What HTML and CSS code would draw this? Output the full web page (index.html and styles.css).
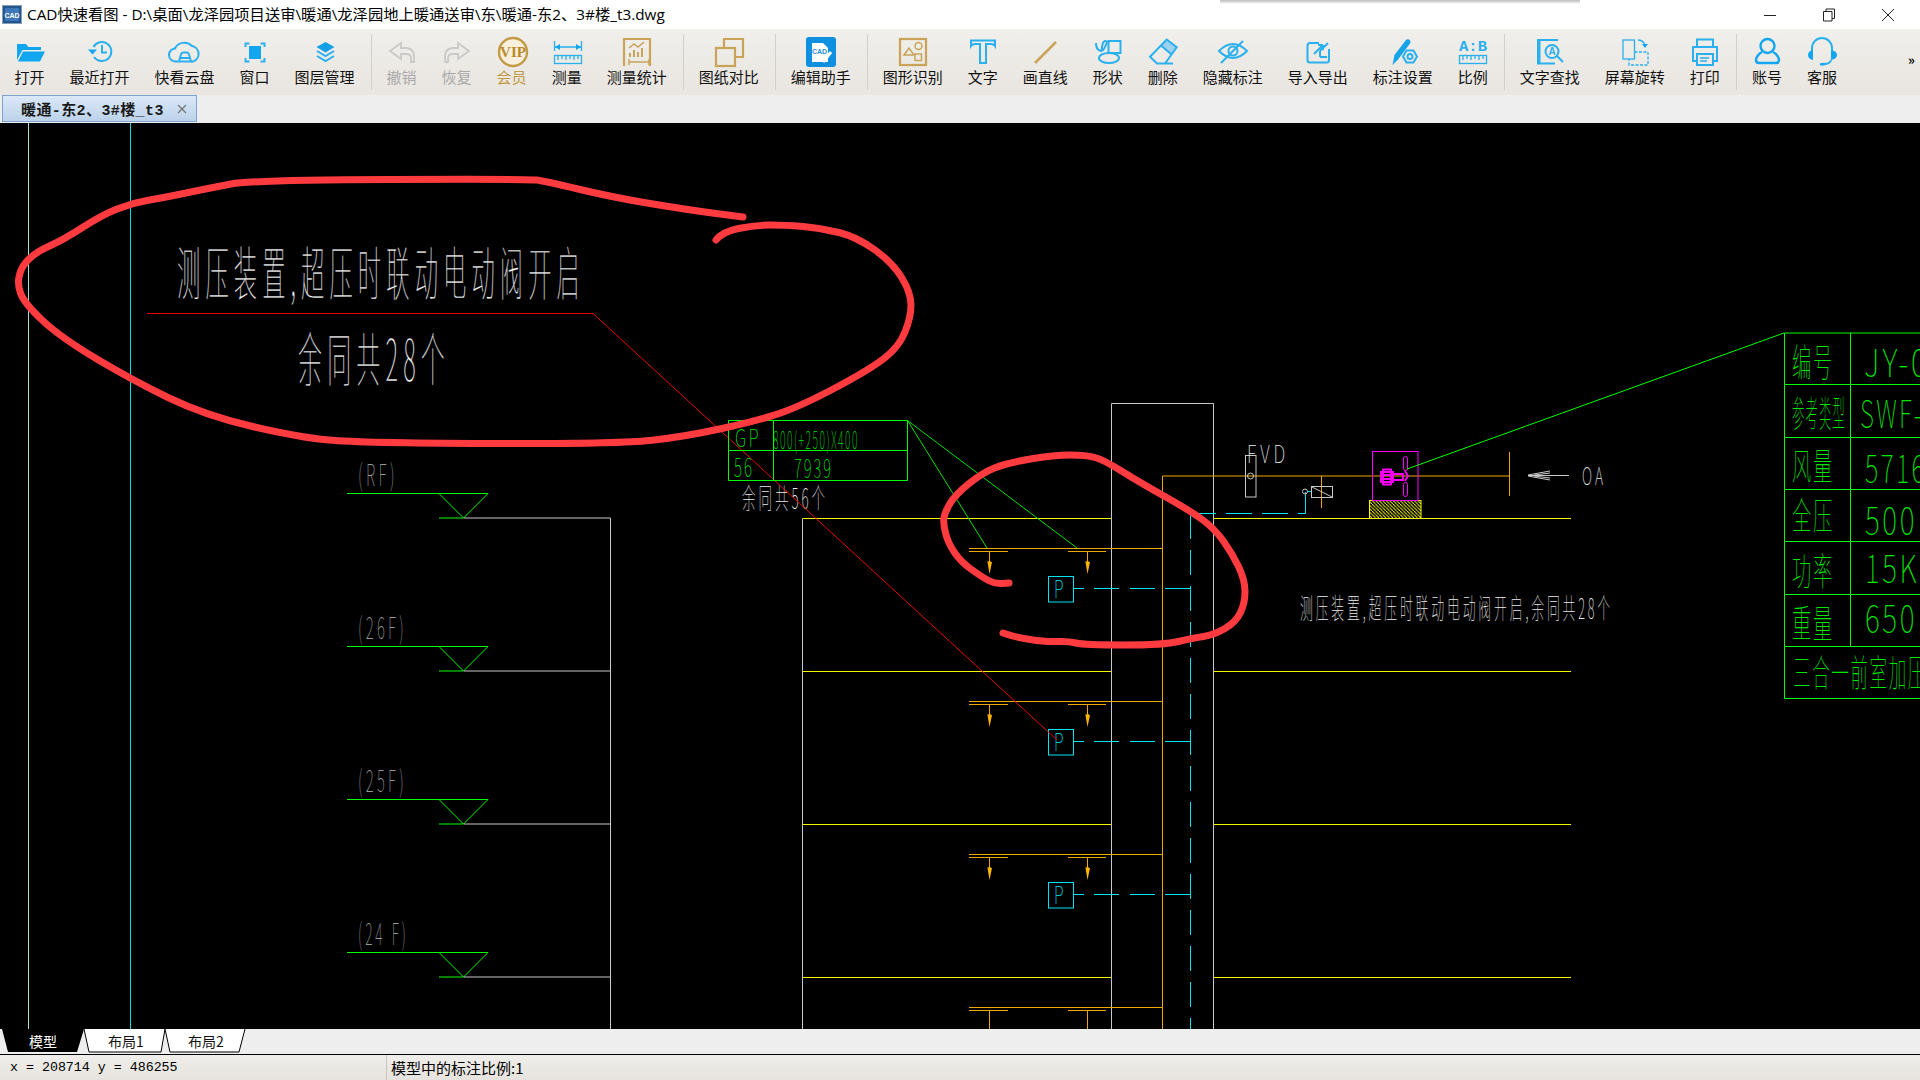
FILE: index.html
```html
<!DOCTYPE html>
<html lang="zh">
<head>
<meta charset="UTF-8">
<link rel="stylesheet" href="styles.css">
<title>CAD快速看图</title>
</head>
<body>
<div class="app">

<div class="titlebar">
  <svg class="appicon" width="20" height="19" viewBox="0 0 20 19"><rect x="0.5" y="0.5" width="19" height="18" fill="#23558f" stroke="#8aa0b8"/><rect x="3" y="3" width="14" height="13" fill="#3f78b8"/><text x="10" y="12.5" class="appicon-text">CAD</text></svg>
  <span class="title">CAD快速看图 - D:\桌面\龙泽园项目送审\暖通\龙泽园地上暖通送审\东\暖通-东2、3#楼_t3.dwg</span>
  <div class="winctl">
    <svg width="14" height="14" viewBox="0 0 14 14"><path d="M1 7.5h12" class="winline"/></svg>
    <svg width="14" height="14" viewBox="0 0 14 14"><path d="M1.5 3.5h8.500v9.500h-8.500zM4 3.500v-2.500h8.500v9.500h-2.500" class="winline"/></svg>
    <svg width="14" height="14" viewBox="0 0 14 14"><path d="M1 1l12 12M13 1l-12 12" class="winline"/></svg>
  </div>
  <div class="shadow"></div>
</div>

<div class="toolbar">
  <div class="tool"><svg viewBox="0 0 40 38"><path class="fb" d="M7 14h9l2.500 3H31v3H12.500L7 30z"/><path class="fb" d="M13 21.500h22L30 31.500H8z"/></svg><span>打开</span></div>
  <div class="tool"><svg viewBox="0 0 40 38"><path class="sb" d="M13.500 17A9.500 9.500 0 1 1 14 27"/><path class="fb" d="M8 19.500h9l-4.500 5z"/><path class="sb" d="M22 15v7.500h5"/></svg><span>最近打开</span></div>
  <div class="tool"><svg viewBox="0 0 40 38"><path class="sb" d="M13 31.500h-2a6.500 6.500 0 0 1-1-13A10 9 0 0 1 27 16a8 8 0 0 1 1 15.500h-2"/><path class="sb" d="M14 31.500l2-7q.5-2 2.500-2h3q2 0 2.500 2l2 7zM15 28h10"/></svg><span>快看云盘</span></div>
  <div class="tool"><svg viewBox="0 0 40 38"><path class="sb" d="M10.500 17v-3.500h4M25.500 13.500h4V17M29.500 28v3.500h-4M14.500 31.500h-4V28"/><rect class="fb" x="14" y="16" width="12" height="13"/></svg><span>窗口</span></div>
  <div class="tool"><svg viewBox="0 0 40 38"><path fill="#13a0e6" d="M20.500 12l9 5-9 5.500-9-5.500z"/><path class="sb" d="M12 21l8.500 5 8.500-5M12 26l8.500 5 8.500-5"/></svg><span>图层管理</span></div>
  <i class="sep"></i>
  <div class="tool off"><svg viewBox="0 0 40 38"><path class="sg" d="M8 21l11-8v5h5q8 .5 8 8v6h-3v-4q0-4-5-4h-5v5z"/></svg><span>撤销</span></div>
  <div class="tool off"><svg viewBox="0 0 40 38"><path class="sg" d="M32 21l-11-8v5h-5q-8 .5-8 8v6h3v-4q0-4 5-4h5v5z"/></svg><span>恢复</span></div>
  <div class="tool vip"><svg viewBox="0 0 40 38"><circle cx="21" cy="22" r="14" fill="#f8f0dc" stroke="#c39a45" stroke-width="2.400"/><text x="21" y="27" class="viptext">VIP</text></svg><span>会员</span></div>
  <div class="tool"><svg viewBox="0 0 40 38"><path class="thin" d="M7.500 11v10M34.500 11v10M8 17h26"/><path class="fb" d="M8 17l5-3v6zM34 17l-5-3v6z"/><rect class="thin" x="7.500" y="25.500" width="27" height="8"/><path class="thin" d="M11 26v4M15 26v3M19 26v4M23 26v3M27 26v4M31 26v3"/></svg><span>测量</span></div>
  <div class="tool"><svg viewBox="0 0 40 38"><path class="sd" d="M7 26V9h26v17M7 26v10M33 26v10"/><path class="fd" d="M12 23h2v4h-2zM16 20h2v7h-2zM20 22h2v5h-2zM24 18h2v9h-2z"/><path class="thin-d" d="M12 18l5-4 4 3 6-5M12 32h20M12 29v6M32 29v6"/></svg><span>测量统计</span></div>
  <i class="sep"></i>
  <div class="tool"><svg viewBox="0 0 40 38"><path class="sd" d="M15 17V9h19v18h-8"/><rect class="sd" x="7" y="18" width="19" height="18"/></svg><span>图纸对比</span></div>
  <i class="sep"></i>
  <div class="tool"><svg viewBox="0 0 40 38"><rect x="5" y="7" width="30" height="30" rx="3" fill="#0e8fe0"/><path fill="#fff" d="M11 13h11l5 5v14H11z"/><text x="18.500" y="24" class="cadtext">CAD</text><path stroke="#fff" stroke-width="3" d="M22 32l8-10"/></svg><span>编辑助手</span></div>
  <i class="sep"></i>
  <div class="tool"><svg viewBox="0 0 40 38"><rect class="sd" x="7" y="9" width="26" height="26"/><path class="thin-d" d="M11 25l5-7 5 7z"/><circle class="thin-d" cx="25.500" cy="16" r="3.500"/><rect class="thin-d" x="22" y="24" width="6.500" height="6.500"/></svg><span>图形识别</span></div>
  <div class="tool"><svg viewBox="0 0 40 38"><path class="sb" d="M8 16v-5.500h24V16c-1-1.500-2-2-4-2h-5v19h-6V14h-5c-2 0-3 .5-4 2z"/></svg><span>文字</span></div>
  <div class="tool"><svg viewBox="0 0 40 38"><path stroke="#c7a559" stroke-width="2.500" d="M10 33l21-21" fill="none"/></svg><span>画直线</span></div>
  <div class="tool"><svg viewBox="0 0 40 38"><rect class="sb" x="20.500" y="11" width="12" height="12"/><ellipse class="sb" cx="21" cy="28" rx="10" ry="5"/><path class="sb" d="M8 13c0 6 3 9 7 7 2-2 3-5 4-8-1-2-3-1-4 1-1 3-1 5-2 9"/></svg><span>形状</span></div>
  <div class="tool"><svg viewBox="0 0 40 38"><path fill="#9fd0ef" d="M18 15.500l5.700-6 10 7.800-6 6.700z"/><path class="sb" d="M7 26.700L23.700 9.500l10 7.800L22 33.500h-8zM18 15.500l10 8.500M14 33.500h16"/></svg><span>删除</span></div>
  <div class="tool"><svg viewBox="0 0 40 38"><path class="sb" d="M6 21q14-14 28 0-14 14-28 0z"/><circle class="sb" cx="20" cy="21" r="4.500"/><path class="sb" d="M8 33L30 11"/></svg><span>隐藏标注</span></div>
  <div class="tool"><svg viewBox="0 0 40 38"><path class="sb" d="M21 13h-9q-2.500 0-2.500 2.500v15q0 2 2.500 2h17q2 0 2-2.500v-11"/><path class="sb" d="M16 24l9-9M25 15h-5M25 15v5M22 21l8-8M22 21v6M22 27h7"/></svg><span>导入导出</span></div>
  <div class="tool"><svg viewBox="0 0 40 38"><path fill="#15a3ea" d="M9.500 35l2-10L23 10q2-1.500 4 .5 1 1.500 0 3l-12 16z"/><path class="sb" d="M20 26.500l3.500-6h7l3.500 6-3.500 6h-7z"/><circle class="sb" cx="27" cy="26.500" r="2.500"/></svg><span>标注设置</span></div>
  <div class="tool"><svg viewBox="0 0 40 38"><text x="6" y="21" class="abtext" textLength="28" lengthAdjust="spacingAndGlyphs">A:B</text><rect class="thin" x="6.500" y="25.500" width="27" height="8"/><path class="thin" d="M10 26v4M14 26v3M18 26v4M22 26v3M26 26v4M30 26v3"/></svg><span>比例</span></div>
  <i class="sep"></i>
  <div class="tool"><svg viewBox="0 0 40 38"><path class="sb" d="M28 10H8v23.500h17"/><path stroke="#2ab0ef" stroke-width="3" fill="none" d="M9 10v23"/><circle class="sb" cx="22" cy="21.500" r="6.500"/><path class="sb" d="M27 26l6 6"/><text x="22" y="25" class="atext">A</text></svg><span>文字查找</span></div>
  <div class="tool"><svg viewBox="0 0 40 38"><rect class="thin" x="8" y="10" width="11.500" height="19"/><path class="thin dashed" d="M19.500 22H33v13H14v-6"/><path class="thin" d="M23 10q5 0 7 5"/><path class="fb" d="M27 14h6l-3 4z"/></svg><span>屏幕旋转</span></div>
  <div class="tool"><svg viewBox="0 0 40 38"><path class="sb" d="M12 17v-7.500h16V17M12 31H8V17h24v14h-4"/><rect class="sb" x="12" y="24" width="16" height="11"/><path class="thin" d="M15 28h9M15 31h7"/></svg><span>打印</span></div>
  <i class="sep"></i>
  <div class="tool"><svg viewBox="0 0 40 38"><circle cx="20.500" cy="16" r="7" fill="none" stroke="#12a6f2" stroke-width="2.400"/><path fill="none" stroke="#12a6f2" stroke-width="2.400" d="M15 22c-4 2-6 6-6 8 0 2 1 3 3 3h17c2 0 3-1 3-3 0-2-2-6-6-8"/></svg><span>账号</span></div>
  <div class="tool"><svg viewBox="0 0 40 38"><path class="sb" d="M10 22v-4a10 10 0 0 1 20 0v4M29 30q-1 4-7 4"/><path class="fb" d="M11 20v10q-5-1-5-5t5-5zM29 20v10q6-1 6-5t-6-5z"/><rect class="fb" x="18" y="33" width="5" height="2.500" rx="1"/></svg><span>客服</span></div>
  <div class="more">»</div>
</div>

<div class="tabrow">
  <div class="doctab"><span>暖通-东2、3#楼_t3</span><svg width="10" height="10" viewBox="0 0 10 10"><path d="M1 1l8 8M9 1l-8 8" stroke="#777" stroke-width="1.300"/></svg></div>
</div>

<svg class="drawing" viewBox="0 123 1920 906">
  <defs>
    <pattern id="hatch" width="3.500" height="3.500" patternUnits="userSpaceOnUse">
      <path d="M0 0l3.500 3.500" stroke="#ffff00" stroke-width="1"/>
    </pattern>
    <g id="level">
      <path class="grn" d="M347 493.500h141l-24.500 24.500-24.500-24.500M439 518h24"/>
      <path class="wht" d="M463.500 518H610.500V671"/>
    </g>
    <g id="floor">
      <path class="org" d="M969 548.500H1162M969 551.500h39M1068 551.500h38M989.500 551v20M1087.500 551v20"/>
      <path class="arw" d="M986.500 560l1.500 2 1.500-2 1.500 2 1 0-2.500 12-2-12zM1084.500 560l1.500 2 1.500-2 1.500 2 1 0-2.500 12-2-12z"/>
      <rect class="cyn" x="1048.500" y="576.500" width="25" height="25.500"/>
      <text class="cad cyt" x="1054" y="598" font-size="25" textLength="13" lengthAdjust="spacingAndGlyphs">P</text>
      <path class="cyn" d="M1073 588.500h11M1094 588.500h25M1130 588.500h25M1165 588.500h25"/>
    </g>
  </defs>

  <path class="pale" d="M28.500 123V1029"/>
  <path class="cya2" d="M130.500 123V1029"/>

  <use href="#level"/>
  <use href="#level" y="153"/>
  <use href="#level" y="306"/>
  <use href="#level" y="459"/>
  <text class="cad gry" x="358" y="486" font-size="30" textLength="40" lengthAdjust="spacingAndGlyphs">(RF)</text>
  <text class="cad gry" x="358" y="639" font-size="30" textLength="49" lengthAdjust="spacingAndGlyphs">(26F)</text>
  <text class="cad gry" x="358" y="792" font-size="30" textLength="49" lengthAdjust="spacingAndGlyphs">(25F)</text>
  <text class="cad gry" x="358" y="945" font-size="30" textLength="51" lengthAdjust="spacingAndGlyphs">(24 F)</text>

  <path class="wht" d="M802.500 1029V518.500M1111.500 1029V403.500H1213.500V1029"/>
  <path class="ylw" d="M802.500 518.500H1111M802.500 671.500H1111M802.500 824.500H1111M802.500 977.500H1111M1214 518.500H1571M1214 671.500H1571M1214 824.500H1571M1214 977.500H1571"/>

  <path class="org" d="M1162.500 1029V476H1509M1509.500 452V496M1321.500 476V508"/>
  <use href="#floor"/>
  <use href="#floor" y="153"/>
  <use href="#floor" y="306"/>
  <path class="org" d="M969 1007.500H1162M969 1010.500h39M1068 1010.500h38M989.500 1010v19M1087.500 1010v19"/>

  <path class="cyn" stroke-dasharray="25 11" d="M1190.500 514V1029"/>
  <path class="cyn" d="M1190 513.500h26M1226 513.500h26M1262 513.500h26M1298 513.500h7.500V492M1307 491.500h4"/>
  <circle class="wht" cx="1305" cy="491.500" r="2.500"/>
  <rect class="wht" x="1311.500" y="486.500" width="21" height="11"/>
  <path class="wht" d="M1312 487l20 10"/>

  <rect class="wht" x="1245.500" y="455.500" width="10.500" height="41.500"/>
  <circle class="wht" cx="1250.500" cy="476" r="3"/>
  <text class="cad wtx" x="1247" y="463" font-size="25" textLength="42" lengthAdjust="spacingAndGlyphs">FVD</text>

  <rect class="hat" x="1369.500" y="500.500" width="51.500" height="18"/>
  <rect class="mag" x="1372.500" y="451.500" width="45.500" height="49"/>
  <path class="mag2" d="M1381 472h12v10h-12zM1383 469.500h8v15h-8zM1381 475h12M1381 479h12M1393 474h10v6h-10zM1405 471l3 5-3 5"/>
  <rect class="mag" x="1403.500" y="456.500" width="4" height="14" rx="2"/>
  <rect class="mag" x="1403.500" y="482.500" width="4" height="14" rx="2"/>
  <path class="wht" d="M1528 475.500H1569M1528 475l22-4M1528 476l22 4M1534 475l16-2M1534 476l16 2"/>
  <text class="cad wtx" x="1582" y="485" font-size="25" textLength="24" lengthAdjust="spacingAndGlyphs">OA</text>

  <path class="grn" d="M1407 469L1784 333"/>
  <path class="grn" d="M1784.500 333V698.500H1920M1784.500 333H1920M1784.500 384.500H1920M1784.500 437.500H1920M1784.500 489.500H1920M1784.500 541.500H1920M1784.500 594.500H1920M1784.500 646.500H1920M1850.500 333V646"/>
  <g class="cad grt">
    <text x="1792" y="376" font-size="38" textLength="42" lengthAdjust="spacingAndGlyphs">编号</text>
    <text x="1792" y="427" font-size="36" textLength="54" lengthAdjust="spacingAndGlyphs">参考类型</text>
    <text x="1792" y="480" font-size="37" textLength="42" lengthAdjust="spacingAndGlyphs">风量</text>
    <text x="1792" y="530" font-size="37" textLength="42" lengthAdjust="spacingAndGlyphs">全压</text>
    <text x="1792" y="585" font-size="38" textLength="42" lengthAdjust="spacingAndGlyphs">功率</text>
    <text x="1792" y="637" font-size="38" textLength="42" lengthAdjust="spacingAndGlyphs">重量</text>
    <text x="1793" y="687" font-size="37" textLength="134" lengthAdjust="spacingAndGlyphs">三合一前室加压</text>
    <text x="1864" y="377" font-size="38" textLength="66" lengthAdjust="spacingAndGlyphs">JY-0</text>
    <text x="1860" y="428" font-size="38" textLength="64" lengthAdjust="spacingAndGlyphs">SWF-</text>
    <text x="1865" y="483" font-size="38" textLength="62" lengthAdjust="spacingAndGlyphs">5716</text>
    <text x="1865" y="535" font-size="38" textLength="52" lengthAdjust="spacingAndGlyphs">500</text>
    <text x="1865" y="583" font-size="38" textLength="54" lengthAdjust="spacingAndGlyphs">15K</text>
    <text x="1865" y="633" font-size="38" textLength="52" lengthAdjust="spacingAndGlyphs">650</text>
  </g>

  <text class="cad wtx" x="1300" y="619" font-size="28" textLength="313" lengthAdjust="spacingAndGlyphs">测压装置,超压时联动电动阀开启,余同共28个</text>
  <text class="cad big" x="177" y="295" font-size="58" textLength="408" lengthAdjust="spacingAndGlyphs">测压装置,超压时联动电动阀开启</text>
  <text class="cad big" x="298" y="381" font-size="58" textLength="152" lengthAdjust="spacingAndGlyphs">余同共28个</text>
  <text class="cad wtx" x="742" y="509" font-size="28" textLength="86" lengthAdjust="spacingAndGlyphs">余同共56个</text>

  <path class="redl" d="M147 313.500H593L1057 740"/>

  <path class="grn" d="M728.500 420.500H907.500V480.500H728.500zM728.500 450.500H907.500M773.500 420.500V480.500"/>
  <path class="gr2" d="M907.500 420.500L987 548M907.500 420.500L1077 548"/>
  <g class="cad grt">
    <text x="735" y="447" font-size="25" textLength="26" lengthAdjust="spacingAndGlyphs">GP</text>
    <text x="773" y="449" font-size="24" textLength="86" lengthAdjust="spacingAndGlyphs">800(+250)X400</text>
    <text x="734" y="477" font-size="26" textLength="20" lengthAdjust="spacingAndGlyphs">56</text>
    <text x="794" y="478" font-size="26" textLength="39" lengthAdjust="spacingAndGlyphs">7939</text>
  </g>

  <path class="ink" d="M743 217L716 213.500Q689 210 650 203.500Q611 197 578 189Q545 181 536 180Q527 179 390 179.500Q252 180 231 184Q210 188 186 193Q162 198 147 200.500Q132 203 117 209Q102 215 82.500 227.500Q63 240 49.500 246Q36 252 28.500 259.500Q21 267 19.500 275Q17 283 20.500 293Q24 303 42 320Q60 337 96 358.500Q132 380 168 397.500Q204 415 250.500 426Q297 437 328.500 440Q360 443 488.500 443.500Q617 444 650 440.500Q683 437 722 428.500Q761 420 782 412.500Q803 405 836 387.500Q869 370 884 358.500Q899 347 905 332Q911 317 911 305Q911 293 902 278Q893 263 875 250Q857 237 839 232.500Q821 228 803 226.500Q785 225 770 225Q755 225 738.500 228.500Q722 232 716 240"/>
  <path class="ink" d="M1009 583L1002 583.500Q995 584 988.500 580.500Q982 577 971.500 569.500Q961 562 954.500 552.500Q948 543 945.500 533Q943 523 944 517.500Q945 512 950 503.500Q955 495 968.500 484Q982 473 994.500 468Q1007 463 1030.500 459Q1054 455 1070 455Q1086 455 1095 457.500Q1104 460 1121.500 471Q1139 482 1164 496Q1189 510 1201.500 519Q1214 528 1223 540.500Q1232 553 1238.500 566.500Q1245 580 1245 591.500Q1245 603 1240.500 612.500Q1236 622 1225 628.500Q1214 635 1203.500 636.500Q1193 638 1178.500 641.500Q1164 645 1124 645Q1084 645 1076 643Q1068 641 1057 641.500Q1046 642 1030 639.500Q1014 637 1003 633"/>
</svg>

<div class="sheetrow">
  <svg width="260" height="25" viewBox="0 0 260 25">
    <path d="M2 0L8 23H77L84 0z" fill="#000"/>
    <path d="M84 0L89 23H161L165 0" fill="#fff" stroke="#000"/>
    <path d="M165 0L170 23H239L245 0" fill="#fff" stroke="#000"/>
    <text x="43" y="18" class="sheet sheet-on">模型</text>
    <text x="126" y="18" class="sheet">布局1</text>
    <text x="206" y="18" class="sheet">布局2</text>
  </svg>
</div>

<div class="statusbar">
  <div class="coords">x = 208714 y = 486255</div>
  <div class="scale">模型中的标注比例:1</div>
</div>

</div>
</body>
</html>
```

FILE: styles.css
```css
html, body { margin: 0; padding: 0; background: #fff; overflow: hidden; }
body { font-family: "Noto Sans CJK SC", "Liberation Sans", sans-serif; color: #000; }

.app { display: flex; flex-direction: column; width: 1920px; height: 1080px; }

/* title bar */
.titlebar { display: flex; align-items: center; height: 29px; background: #fff; position: relative; flex: none; }
.appicon { margin-left: 2px; flex: none; }
.appicon-text { font: bold 7px "Liberation Sans", sans-serif; fill: #fff; text-anchor: middle; }
.title { margin-left: 5px; font-family: "Open Sans", "Noto Sans CJK SC", sans-serif; font-size: 15.300px; white-space: nowrap; line-height: 1; }
.winctl { margin-left: auto; display: flex; gap: 45px; padding-right: 25px; }
.winline { fill: none; stroke: #222; stroke-width: 1; }
.shadow { position: absolute; left: 1220px; top: 0; width: 360px; height: 4px; background: linear-gradient(#bbb, #fff); }

/* toolbar */
.toolbar { display: flex; height: 66px; flex: none; padding-left: 2px; background: linear-gradient(#f0efeb, #e9e5e0); position: relative; }
.tool { display: flex; flex-direction: column; align-items: center; padding: 0 12.500px; font-size: 15px; line-height: 18px; white-space: nowrap; }
.tool svg { width: 40px; height: 38px; margin: 1px -8px 0; flex: none; }
.tool span { color: #111; }
.tool.off span { color: #a9a9a9; }
.tool.vip span { color: #c29a46; }
.sep { width: 1px; height: 56px; margin: 5px 2px 0 4px; background: #d2d0cc; flex: none; }
.more { margin-left: auto; padding: 21px 5px 0 0; font-size: 13px; font-weight: 700; line-height: 20px; }

/* icon strokes */
.fb { fill: #12a6f0; }
.fd { fill: #c9a458; }
.sb { fill: none; stroke: #2ab0ef; stroke-width: 2; }
.sg { fill: none; stroke: #c9c9c9; stroke-width: 1.800; }
.sd { fill: none; stroke: #c9a458; stroke-width: 2.200; }
.thin { fill: none; stroke: #2ab0ef; stroke-width: 1.300; }
.thin-d { fill: none; stroke: #c9a458; stroke-width: 1.500; }
.dashed { stroke-dasharray: 3 1.500; }
.viptext { font: bold 15px "Liberation Serif", serif; fill: #b88a2c; text-anchor: middle; }
.cadtext { font: bold 7px "Liberation Sans", sans-serif; fill: #1d8fdc; text-anchor: middle; }
.abtext { font: bold 14px "Liberation Mono", monospace; fill: #2ab0ef; }
.atext { font: bold 10px "Liberation Sans", sans-serif; fill: #2ab0ef; text-anchor: middle; }

/* document tabs */
.tabrow { height: 28px; flex: none; background: #eee; }
.doctab { display: flex; align-items: center; box-sizing: border-box; width: 195px; height: 27px; margin-left: 2px; padding: 0 9px 0 18px; border: 1px solid #7fa3cf; background: linear-gradient(#dbe8f8, #bcd2ea); }
.doctab span { font-family: "Liberation Mono", "Noto Sans CJK SC", monospace; font-weight: 700; font-size: 15px; letter-spacing: .4px; white-space: nowrap; color: #1a1a1a; }
.doctab svg { margin-left: auto; }

/* drawing */
.drawing { display: block; width: 1920px; height: 906px; background: #000; flex: none; }
.drawing path, .drawing rect, .drawing circle { fill: none; stroke-width: 1; }
.grn { stroke: #00ff00; }
.gr2 { stroke: #00e000; }
.wht { stroke: #c8c8c8; }
.ylw { stroke: #f5f500; }
.org { stroke: #f0a800; }
.cyn { stroke: #00e5f5; }
.cya2 { stroke: #00e0e8; }
.pale { stroke: #9fdcdc; }
.mag { stroke: #ff00ff; }
.drawing .mag2 { stroke: #ff00ff; stroke-width: 1.800; }
.redl { stroke: #e80000; }
.drawing .arw { fill: #ffb400; stroke: none; }
.drawing .hat { fill: url(#hatch); stroke: #ffff00; }
.drawing .ink { stroke: #ff3b3f; stroke-width: 7; stroke-linecap: round; stroke-linejoin: round; }
.cad { font-family: "Noto Sans CJK SC", "Liberation Sans", sans-serif; font-weight: 100; letter-spacing: .22em; }
.wtx { fill: #eee; }
.big { fill: #fff; stroke: #000; stroke-width: .3px; }
.gry { fill: #9a9a9a; }
.grt { fill: #00e800; }
.cyt { fill: #00e5f5; }

/* layout tabs and status bar */
.sheetrow { height: 25px; flex: none; background: #eee; border-bottom: 1px solid #000; overflow: hidden; }
.sheetrow svg { display: block; }
.sheet { font-size: 14px; fill: #111; text-anchor: middle; }
.sheet-on { fill: #fff; }
.statusbar { flex: 1; display: flex; align-items: center; background: linear-gradient(#f0eeea, #e6e3de); }
.coords { width: 376px; padding-left: 10px; font-family: "Liberation Mono", monospace; font-size: 13.300px; }
.scale { height: 100%; padding-left: 4px; border-left: 1px solid #c8c6c2; font-size: 15px; line-height: 25px; }
```
